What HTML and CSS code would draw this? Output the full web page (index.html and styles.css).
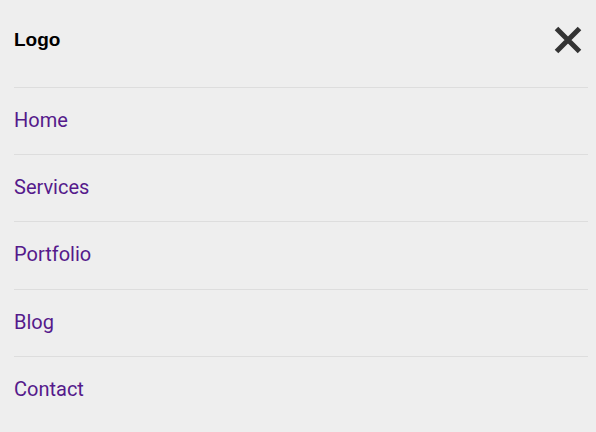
FILE: index.html
```html
<!DOCTYPE html>
<html lang="en">
<head>
<meta charset="utf-8">
<title>Menu</title>
<link rel="stylesheet" href="styles.css">
</head>
<body>
<div class="menu">
  <header class="menu-header">
    <div class="logo">Logo</div>
    <button class="close" aria-label="Close menu">
      <svg width="30" height="30" viewBox="0 0 30 30" aria-hidden="true">
        <path d="M3.5 3.5 L26.5 26.5 M26.5 3.5 L3.5 26.5" stroke="#333333" stroke-width="5" fill="none"/>
      </svg>
    </button>
  </header>
  <nav>
    <ul class="nav-list">
      <li class="nav-item"><a class="nav-link" href="#">Home</a></li>
      <li class="nav-item"><a class="nav-link" href="#">Services</a></li>
      <li class="nav-item"><a class="nav-link" href="#">Portfolio</a></li>
      <li class="nav-item"><a class="nav-link" href="#">Blog</a></li>
      <li class="nav-item"><a class="nav-link" href="#">Contact</a></li>
    </ul>
  </nav>
</div>
</body>
</html>
```

FILE: styles.css
```css
html, body {
  margin: 0;
  padding: 0;
  background: #eeeeee;
}

.menu {
  padding: 0 8px 0 14px;
  font-family: Roboto, "Liberation Sans", sans-serif;
}

.menu-header {
  display: flex;
  align-items: center;
  justify-content: space-between;
  height: 79px;
  margin-bottom: 8px;
}

.logo {
  font-family: "Liberation Sans", Arial, sans-serif;
  font-weight: bold;
  font-size: 19px;
  color: #000000;
}

.close {
  display: flex;
  padding: 0;
  margin: 0 5px 0 0;
  border: 0;
  background: transparent;
  cursor: pointer;
}

.nav-list {
  list-style: none;
  margin: 0;
  padding: 0;
}

.nav-item {
  border-top: 1px solid #dddddd;
  padding: 19px 0 21px;
  font-size: 20px;
  line-height: 26.2px;
}

.nav-link {
  color: #551a8b;
  text-decoration: none;
}
```
